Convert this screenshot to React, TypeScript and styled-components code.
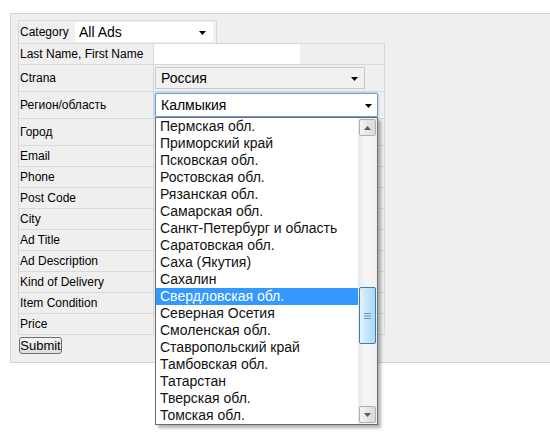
import { createGlobalStyle, styled } from 'styled-components'

const GlobalStyle = createGlobalStyle`
  html, body {
    margin: 0;
    padding: 0;
    background: #fff;
  }
  body {
    font-family: "Liberation Sans", Arial, sans-serif;
    color: #000;
  }
`

const regions = [
  'Пермская обл.',
  'Приморский край',
  'Псковская обл.',
  'Ростовская обл.',
  'Рязанская обл.',
  'Самарская обл.',
  'Санкт-Петербург и область',
  'Саратовская обл.',
  'Саха (Якутия)',
  'Сахалин',
  'Свердловская обл.',
  'Северная Осетия',
  'Смоленская обл.',
  'Ставропольский край',
  'Тамбовская обл.',
  'Татарстан',
  'Тверская обл.',
  'Томская обл.',
]

const selectedRegion = 'Свердловская обл.'

const rows: { label: string; h: number; field?: 'name' | 'country' | 'region' }[] = [
  { label: 'Last Name, First Name', h: 21, field: 'name' },
  { label: 'Ctrana', h: 27, field: 'country' },
  { label: 'Регион/область', h: 27, field: 'region' },
  { label: 'Город', h: 27 },
  { label: 'Email', h: 21 },
  { label: 'Phone', h: 21 },
  { label: 'Post Code', h: 21 },
  { label: 'City', h: 21 },
  { label: 'Ad Title', h: 21 },
  { label: 'Ad Description', h: 21 },
  { label: 'Kind of Delivery', h: 21 },
  { label: 'Item Condition', h: 21 },
  { label: 'Price', h: 21 },
]

const Arrow = () => (
  <svg width="7" height="4" viewBox="0 0 7 4">
    <polygon points="0,0 7,0 3.5,4" fill="#000" />
  </svg>
)

const SelectBox = ({ text, variant, width, height }: { text: string; variant: 'plain' | 'grey' | 'focus'; width: number; height: number }) => (
  <Select $variant={variant} $w={width} $h={height}>
    <span>{text}</span>
    <Arrow />
  </Select>
)

export default function App() {
  return (
    <>
      <GlobalStyle />
      <Page>
        <Panel>
          <CategoryBox>
            <CatLabel>Category</CatLabel>
            <SelectBox text="All Ads" variant="plain" width={138} height={20} />
          </CategoryBox>
          <Table>
            {rows.map((row) => (
              <Row key={row.label} $h={row.h}>
                <LabelCell>{row.label}</LabelCell>
                <ValueCell>
                  {row.field === 'name' && <TextInput />}
                  {row.field === 'country' && (
                    <FieldWrap $top={2}>
                      <SelectBox text="Россия" variant="grey" width={210} height={22} />
                    </FieldWrap>
                  )}
                  {row.field === 'region' && (
                    <FieldWrap $top={1}>
                      <SelectBox text="Калмыкия" variant="focus" width={223} height={24} />
                      <DropList>
                        <Items>
                          {regions.map((r) => (
                            <Item key={r} $active={r === selectedRegion}>
                              {r}
                            </Item>
                          ))}
                        </Items>
                        <ScrollBar>
                          <ScrollBtn>
                            <svg width="7" height="4" viewBox="0 0 7 4">
                              <polygon points="0,4 7,4 3.5,0" fill="#5a5a5a" />
                            </svg>
                          </ScrollBtn>
                          <Thumb>
                            <svg width="7" height="6" viewBox="0 0 7 6">
                              <rect x="0" y="0" width="7" height="1" fill="#6f95b8" />
                              <rect x="0" y="2.5" width="7" height="1" fill="#6f95b8" />
                              <rect x="0" y="5" width="7" height="1" fill="#6f95b8" />
                            </svg>
                          </Thumb>
                          <ScrollBtn $bottom>
                            <svg width="7" height="4" viewBox="0 0 7 4">
                              <polygon points="0,0 7,0 3.5,4" fill="#5a5a5a" />
                            </svg>
                          </ScrollBtn>
                        </ScrollBar>
                      </DropList>
                    </FieldWrap>
                  )}
                </ValueCell>
              </Row>
            ))}
          </Table>
          <SubmitButton>Submit</SubmitButton>
        </Panel>
      </Page>
    </>
  )
}

const Page = styled.div`
  width: 550px;
  height: 435px;
  padding: 13px 0 0 10px;
  box-sizing: border-box;
  overflow: hidden;
`

const Panel = styled.div`
  background: #efefef;
  border: 1px solid #d3d3d3;
  border-right: none;
  padding: 6px 0 8px 7px;
  display: flex;
  flex-direction: column;
  align-items: flex-start;
`

const CategoryBox = styled.div`
  width: 199px;
  height: 23px;
  box-sizing: border-box;
  border: 1px solid #d9d9d9;
  border-bottom: none;
  display: flex;
  align-items: center;
`

const CatLabel = styled.div`
  width: 56px;
  font-size: 12px;
  padding-left: 1px;
  box-sizing: border-box;
`

const Select = styled.div<{ $variant: 'plain' | 'grey' | 'focus'; $w: number; $h: number }>`
  width: ${(p) => p.$w}px;
  height: ${(p) => p.$h}px;
  box-sizing: border-box;
  display: flex;
  align-items: center;
  justify-content: space-between;
  font-size: 14px;
  padding: 0 ${(p) => (p.$variant === 'focus' ? 5 : 6)}px 0 ${(p) => (p.$variant === 'plain' ? 3 : 5)}px;
  background: ${(p) => (p.$variant === 'grey' ? '#f1f1f1' : '#fff')};
  border: 1px solid
    ${(p) => (p.$variant === 'grey' ? '#c9c9c9' : p.$variant === 'focus' ? '#6f9fd4' : '#fff')};
  border-radius: ${(p) => (p.$variant === 'focus' ? 2 : 0)}px;
  box-shadow: ${(p) => (p.$variant === 'focus' ? '0 0 1px 1px rgba(140, 185, 230, 0.55)' : 'none')};
  svg {
    margin-top: 1px;
  }
`

const Table = styled.div`
  width: 367px;
  box-sizing: border-box;
  border-top: 1px solid #d9d9d9;
  border-left: 1px solid #d9d9d9;
  display: flex;
  flex-direction: column;
`

const Row = styled.div<{ $h: number }>`
  height: ${(p) => p.$h}px;
  box-sizing: border-box;
  border-bottom: 1px solid #d9d9d9;
  display: flex;
`

const LabelCell = styled.div`
  width: 135px;
  box-sizing: border-box;
  border-right: 1px solid #d9d9d9;
  padding-left: 1px;
  font-size: 12px;
  display: flex;
  align-items: center;
  white-space: nowrap;
`

const ValueCell = styled.div`
  flex: 1;
  border-right: 1px solid #d9d9d9;
  position: relative;
`

const TextInput = styled.div`
  width: 146px;
  height: 20px;
  background: #fff;
`

const FieldWrap = styled.div<{ $top: number }>`
  position: relative;
  margin: ${(p) => p.$top}px 0 0 1px;
  width: fit-content;
`

const DropList = styled.div`
  position: absolute;
  top: 24px;
  left: 0;
  width: 223px;
  box-sizing: border-box;
  border: 1px solid #6b6b6b;
  background: #fff;
  box-shadow: 3px 3px 3px rgba(0, 0, 0, 0.3);
  display: flex;
  z-index: 10;
`

const Items = styled.div`
  flex: 1;
  display: flex;
  flex-direction: column;
`

const Item = styled.div<{ $active?: boolean }>`
  height: 17px;
  line-height: 17px;
  padding-left: 4px;
  font-size: 14px;
  white-space: nowrap;
  color: ${(p) => (p.$active ? '#fff' : '#111')};
  background: ${(p) => (p.$active ? '#3399ff' : 'transparent')};
`

const ScrollBar = styled.div`
  width: 19px;
  box-sizing: border-box;
  padding: 1px 1px 1px 1px;
  background: linear-gradient(to right, #e9e9e9, #f5f5f5 40%, #f0f0f0);
  display: flex;
  flex-direction: column;
  align-items: center;
`

const ScrollBtn = styled.div<{ $bottom?: boolean }>`
  width: 17px;
  height: 17px;
  box-sizing: border-box;
  border: 1px solid #b0b0b0;
  border-radius: 2px;
  background: linear-gradient(to right, #f4f4f4, #e6e6e6 50%, #d9d9d9);
  display: flex;
  align-items: center;
  justify-content: center;
  margin-top: ${(p) => (p.$bottom ? 'auto' : '0')};
`

const Thumb = styled.div`
  margin-top: 151px;
  width: 17px;
  height: 57px;
  box-sizing: border-box;
  border: 1px solid #3c7fb1;
  border-radius: 2px;
  background: linear-gradient(to right, #e3f4fc, #c4e6fa 45%, #a9d9f4);
  display: flex;
  align-items: center;
  justify-content: center;
`

const SubmitButton = styled.button`
  margin: 2px 0 0 1px;
  width: 43px;
  height: 17px;
  padding: 0;
  border: 1px solid #707070;
  border-radius: 3px;
  background: linear-gradient(#f4f4f4, #dedede);
  font-family: "Liberation Sans", Arial, sans-serif;
  font-size: 13px;
  line-height: 15px;
  color: #000;
`
